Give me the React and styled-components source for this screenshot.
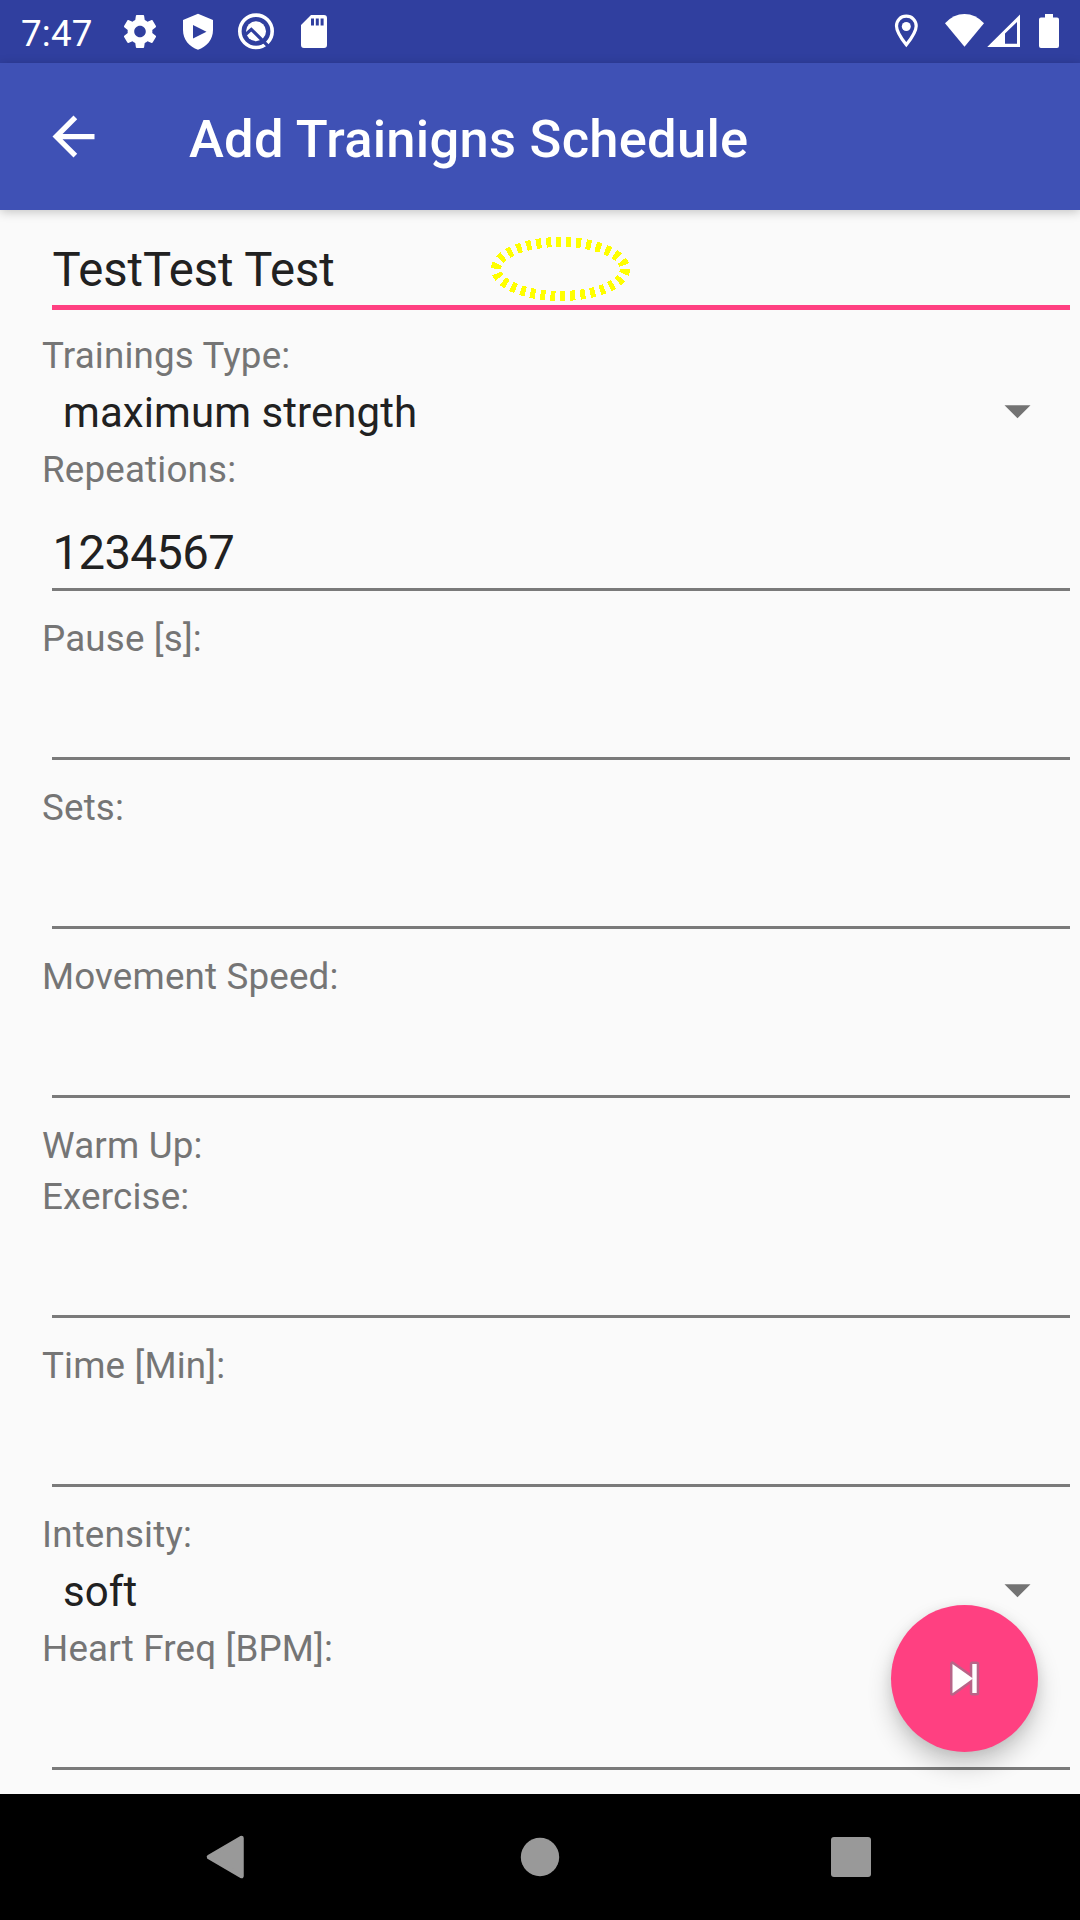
import React from "react";
import styled, { createGlobalStyle } from "styled-components";

const GlobalStyle = createGlobalStyle`
  html, body { margin: 0; padding: 0; background: #fafafa; }
  * { box-sizing: border-box; }
  svg { display: block; flex: none; }
`;

const Screen = styled.div`
  position: relative;
  display: flex;
  flex-direction: column;
  width: 1080px;
  height: 1920px;
  overflow: hidden;
  background: #fafafa;
  font-family: Roboto, "Liberation Sans", sans-serif;
  color: #212121;
`;

const StatusBar = styled.header`
  display: flex;
  justify-content: space-between;
  flex: none;
  height: 63px;
  padding: 0 18px 0 21px;
  background: #303f9f;
  color: #fff;
`;

const StatusGroup = styled.div`
  display: flex;
  gap: ${(p) => p.$gap}px;
`;

const Clock = styled.span`
  width: 81px;
  height: 63px;
  font-size: 36.75px;
  line-height: 67px;
  letter-spacing: 0.2px;
  white-space: nowrap;
`;

const Toolbar = styled.div`
  display: flex;
  flex: none;
  height: 147px;
  padding-left: 42px;
  gap: 84px;
  background: #3f51b5;
  color: #fff;
  box-shadow: 0 2px 10px rgba(0, 0, 0, 0.22);
  z-index: 1;
`;

const BackButton = styled.button`
  display: flex;
  align-items: center;
  width: 63px;
  height: 147px;
  padding: 0;
  border: 0;
  background: none;
`;

const Title = styled.h1`
  margin: 0;
  font-size: 52.5px;
  font-weight: 500;
  line-height: 152px;
  letter-spacing: 0.26px;
  white-space: nowrap;
`;

const Form = styled.main`
  display: flex;
  flex-direction: column;
  flex: 1;
  min-height: 0;
  padding: 1px 0 0 42px;
`;

const Label = styled.label`
  flex: none;
  height: 51px;
  font-size: 36.75px;
  line-height: 53px;
  letter-spacing: 0.17px;
  color: #757575;
  white-space: nowrap;
`;

const Field = styled.div`
  position: relative;
  display: flex;
  flex: none;
  flex-direction: column;
  height: 118px;
  padding: 0 10px;
`;

const FieldText = styled.div`
  height: 94px;
  padding-left: 0.5px;
  font-size: 47.25px;
  line-height: 118px;
  letter-spacing: ${(p) => (p.$numeric ? -0.6 : -0.08)}px;
  white-space: nowrap;
`;

const Underline = styled.div`
  flex: none;
  height: ${(p) => (p.$active ? 5 : 3)}px;
  background: ${(p) => (p.$active ? "#ff4081" : "#7a7a7a")};
`;

const Marker = styled.svg`
  position: absolute;
  left: 448px;
  top: 25px;
`;

const Select = styled.div`
  display: flex;
  flex: none;
  justify-content: space-between;
  height: 63px;
  padding: 0 49px 0 21px;
  font-size: 42px;
  line-height: 65px;
  letter-spacing: 0.07px;
  white-space: nowrap;
`;

const Caret = styled.svg`
  margin-top: 25px;
`;

const Fab = styled.button`
  position: absolute;
  left: 891px;
  top: 1605px;
  width: 147px;
  height: 147px;
  padding: 0;
  border: 0;
  border-radius: 50%;
  background: #ff4081;
  box-shadow: 0 14px 24px rgba(0, 0, 0, 0.2), 0 2px 12px rgba(0, 0, 0, 0.08);
  z-index: 2;
`;

const NavBar = styled.nav`
  display: flex;
  flex: none;
  align-items: center;
  justify-content: space-between;
  height: 126px;
  padding: 0 198px;
  background: #000;
`;

const StatusIcon = ({ x, w = 40, children }) => (
  <svg width={w} height="63" viewBox={`${x} 0 ${w} 63`} fill="#fff">
    {children}
  </svg>
);

const GearIcon = () => (
  <StatusIcon x={120}>
    <path
      transform="translate(120.2 11.7) scale(1.65)"
      d="M19.43 12.98c.04-.32.07-.64.07-.98s-.03-.66-.07-.98l2.11-1.65c.19-.15.24-.42.12-.64l-2-3.46c-.12-.22-.39-.3-.61-.22l-2.49 1c-.52-.4-1.08-.73-1.69-.98l-.38-2.65C14.46 2.18 14.25 2 14 2h-4c-.25 0-.46.18-.49.42l-.38 2.65c-.61.25-1.17.59-1.69.98l-2.49-1c-.23-.09-.49 0-.61.22l-2 3.46c-.13.22-.07.49.12.64l2.11 1.65c-.04.32-.07.65-.07.98s.03.66.07.98l-2.11 1.65c-.19.15-.24.42-.12.64l2 3.46c.12.22.39.3.61.22l2.49-1c.52.4 1.08.73 1.69.98l.38 2.65c.03.24.24.42.49.42h4c.25 0 .46-.18.49-.42l.38-2.65c.61-.25 1.17-.59 1.69-.98l2.49 1c.23.09.49 0 .61-.22l2-3.46c.12-.22.07-.49-.12-.64l-2.11-1.65zM12 15.5c-1.93 0-3.5-1.57-3.5-3.5s1.57-3.5 3.5-3.5 3.5 1.57 3.5 3.5-1.57 3.5-3.5 3.5z"
    />
  </StatusIcon>
);

const ShieldIcon = () => (
  <StatusIcon x={178}>
    <path
      fillRule="evenodd"
      d="M198 13.7L213 20V30C213 39.5 206.5 47 198 49.7C189.5 47 183 39.5 183 30V20ZM193 25V38.5L206.5 31.8Z"
    />
  </StatusIcon>
);

const SearchBadgeIcon = () => (
  <StatusIcon x={236}>
    <circle cx="256" cy="31.3" r="16.2" fill="none" stroke="#fff" strokeWidth="3.6" />
    <circle cx="256" cy="31.3" r="10" />
    <path d="M245 35L251.3 29.4L269.5 47.5" fill="none" stroke="#303f9f" strokeWidth="3.2" />
  </StatusIcon>
);

const SdCardIcon = () => (
  <StatusIcon x={294}>
    <path
      fillRule="evenodd"
      d="M311 15H324Q327 15 327 18V45Q327 48 324 48H304Q301 48 301 45V25ZM311 18.5V25.5H314V18.5ZM315.8 18.5V25.5H318.8V18.5ZM320.6 18.5V25.5H323.6V18.5Z"
    />
  </StatusIcon>
);

const PinIcon = () => (
  <StatusIcon x={886}>
    <path
      d="M906.3 16.2C900.5 16.2 896.5 20.5 896.5 26C896.5 32.5 906.3 44.8 906.3 44.8S916.2 32.5 916.2 26C916.2 20.5 912 16.2 906.3 16.2Z"
      fill="none"
      stroke="#fff"
      strokeWidth="3.2"
    />
    <circle cx="906.3" cy="26.5" r="4.5" />
  </StatusIcon>
);

const WifiIcon = () => (
  <StatusIcon x={944}>
    <path d="M945 23.2Q953.5 14 964.5 14T984 23.2L964.5 46.7Z" />
  </StatusIcon>
);

const SignalIcon = () => (
  <StatusIcon x={986} w={36}>
    <path fillRule="evenodd" d="M1020 14.5V47H987.2ZM1017 22L1005 33.5V43.7H1017Z" />
  </StatusIcon>
);

const BatteryIcon = () => (
  <StatusIcon x={1036} w={26}>
    <path d="M1045 14H1053V17.5H1057Q1059 17.5 1059 19.5V46Q1059 48 1057 48H1041Q1039 48 1039 46V19.5Q1039 17.5 1041 17.5H1045Z" />
  </StatusIcon>
);

const Dropdown = ({ value }) => (
  <Select>
    {value}
    <Caret width="27" height="14" viewBox="0 0 27 14">
      <path d="M.5.3H26.5L13.5 13.3Z" fill="#737373" />
    </Caret>
  </Select>
);

const TextField = ({ value, active, numeric, children }) => (
  <Field>
    <FieldText $numeric={numeric}>{value}</FieldText>
    <Underline $active={active} />
    {children}
  </Field>
);

export default function App() {
  return (
    <Screen>
      <GlobalStyle />
      <StatusBar>
        <StatusGroup $gap={18}>
          <Clock>7:47</Clock>
          <GearIcon />
          <ShieldIcon />
          <SearchBadgeIcon />
          <SdCardIcon />
        </StatusGroup>
        <StatusGroup $gap={18}>
          <PinIcon />
          <StatusGroup $gap={2}>
            <WifiIcon />
            <StatusGroup $gap={14}>
              <SignalIcon />
              <BatteryIcon />
            </StatusGroup>
          </StatusGroup>
        </StatusGroup>
      </StatusBar>

      <Toolbar>
        <BackButton aria-label="Back">
          <svg width="63" height="63" viewBox="0 0 24 24" fill="#fff">
            <path d="M20 11H7.83l5.59-5.59L12 4l-8 8 8 8 1.41-1.41L7.83 13H20v-2z" />
          </svg>
        </BackButton>
        <Title>Add Trainigns Schedule</Title>
      </Toolbar>

      <Form>
        <TextField value="TestTest Test" active>
          <Marker width="142" height="66" viewBox="490 236 142 66" shapeRendering="crispEdges">
            <ellipse
              cx="560.5"
              cy="269"
              rx="64.5"
              ry="27"
              fill="none"
              stroke="#ff0"
              strokeWidth="10"
              strokeDasharray="5 5"
            />
          </Marker>
        </TextField>
        <Label>Trainings Type:</Label>
        <Dropdown value="maximum strength" />
        <Label>Repeations:</Label>
        <TextField value="1234567" numeric />
        <Label>Pause [s]:</Label>
        <TextField />
        <Label>Sets:</Label>
        <TextField />
        <Label>Movement Speed:</Label>
        <TextField />
        <Label>Warm Up:</Label>
        <Label>Exercise:</Label>
        <TextField />
        <Label>Time [Min]:</Label>
        <TextField />
        <Label>Intensity:</Label>
        <Dropdown value="soft" />
        <Label>Heart Freq [BPM]:</Label>
        <TextField />
      </Form>

      <Fab aria-label="Next">
        <svg width="147" height="147" viewBox="891 1605 147 147">
          <g fill="#b96488" stroke="#b96488" strokeWidth="5" strokeLinejoin="round">
            <path d="M952.5 1664V1693.3L973 1678.5Z" />
            <path d="M972.3 1664H976.7V1693H972.3Z" />
          </g>
          <g fill="#fff">
            <path d="M952.5 1664V1693.3L973 1678.5Z" />
            <path d="M972.3 1664H976.7V1693H972.3Z" />
          </g>
        </svg>
      </Fab>

      <NavBar>
        <svg width="62" height="52" viewBox="198 1831 62 52">
          <path
            d="M241.5 1838L209 1857L241.5 1876Z"
            fill="#999"
            stroke="#999"
            strokeWidth="4.5"
            strokeLinejoin="round"
          />
        </svg>
        <svg width="52" height="52" viewBox="514 1831 52 52">
          <circle cx="540" cy="1857" r="19.2" fill="#999" />
        </svg>
        <svg width="62" height="52" viewBox="820 1831 62 52">
          <rect x="831" y="1837" width="40" height="40" rx="3" fill="#999" />
        </svg>
      </NavBar>
    </Screen>
  );
}
